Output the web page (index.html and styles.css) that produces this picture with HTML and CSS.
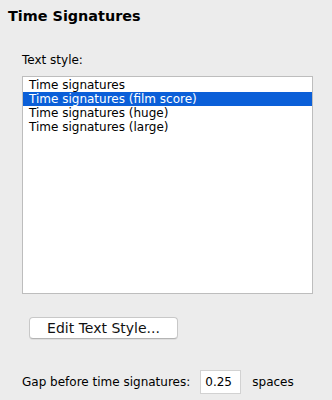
FILE: index.html
```html
<html>
  <head>
    <meta name="viewport" content="width=device-width,initial-scale=1">
    <link rel="stylesheet" href="styles.css">
  </head>

  <body>
    <h1 class="title">Time Signatures</h1>

    <div class="panel">
      <div class="field_label">Text style:</div>

      <ul class="style_list">
        <li>Time signatures</li>
        <li class="selected">Time signatures (film score)</li>
        <li>Time signatures (huge)</li>
        <li>Time signatures (large)</li>
      </ul>

      <button class="edit_button">Edit Text Style...</button>

      <div class="gap_row">
        <span>Gap before time signatures:</span>
        <input type="text" class="gap_input" value="0.25">
        <span>spaces</span>
      </div>
    </div>
  </body>
</html>
```

FILE: styles.css
```css
body {
    margin: 0;
    background: #ececec;
    font-family: 'DejaVu Sans', sans-serif;
    font-size: 12px;
    color: #000;
}
.title {
    margin: 0;
    padding: 7px 0 0 8px;
    font-size: 14.4px;
    font-weight: bold;
    line-height: 18px;
}
.panel {
    padding: 0 20px 0 22px;
}
.field_label {
    margin-top: 28px;
    line-height: 14px;
}
.style_list {
    list-style: none;
    margin: 9px 0 0 0;
    padding: 1px 0;
    width: 289px;
    height: 214px;
    background: #fff;
    border: 1px solid #bdbdbd;
}
.style_list li {
    height: 14px;
    line-height: 14px;
    padding-left: 6px;
}
.style_list li.selected {
    background: #0b5fd8;
    color: #fff;
}
.edit_button {
    display: block;
    margin: 23px 0 0 7px;
    width: 149px;
    height: 22px;
    padding: 0;
    background: #fff;
    border: 1px solid #c8c8c8;
    border-bottom-color: #b4b4b4;
    border-radius: 4px;
    box-shadow: 0 1px 0 rgba(0, 0, 0, 0.06);
    font-family: 'DejaVu Sans', sans-serif;
    font-size: 14px;
    color: #111;
}
.gap_row {
    display: flex;
    align-items: center;
    margin-top: 31px;
}
.gap_input {
    width: 41px;
    height: 24px;
    box-sizing: border-box;
    margin: 0 11px 0 10px;
    padding: 0 0 0 4px;
    border: 1px solid #d2d2d2;
    background: #fff;
    font-family: 'DejaVu Sans', sans-serif;
    font-size: 12px;
    outline: none;
}
```
